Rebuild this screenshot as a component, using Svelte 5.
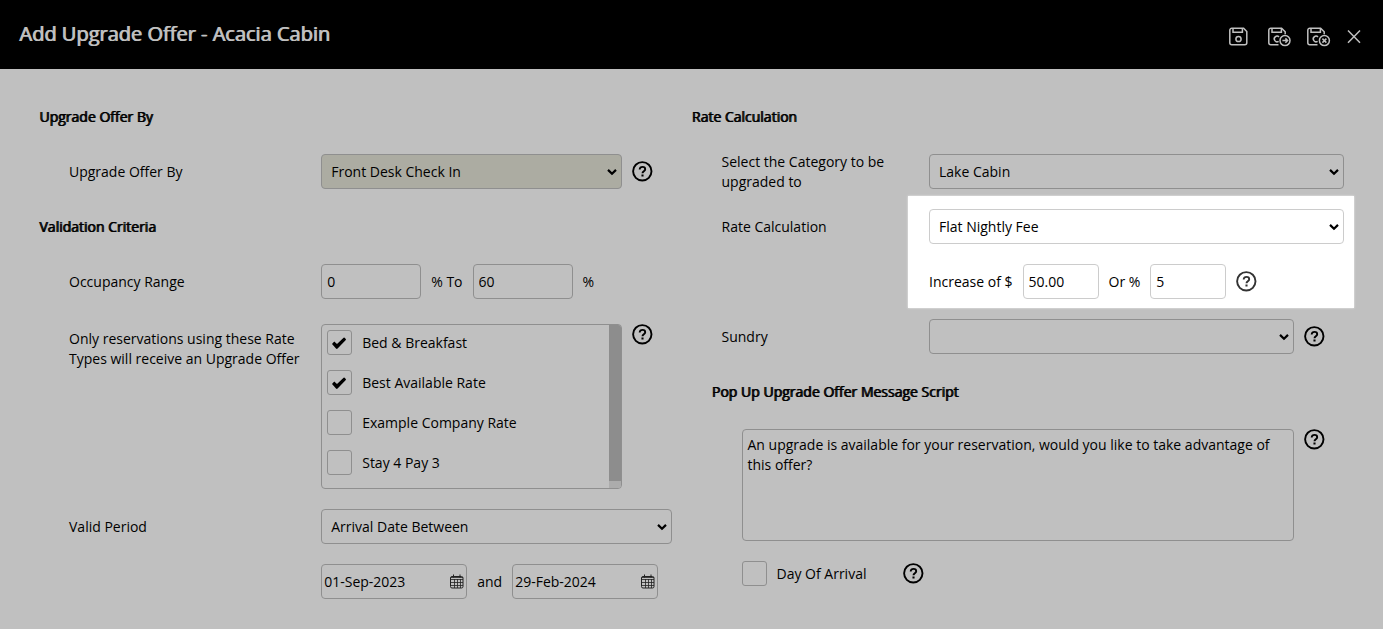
<script>
  let offerBy = $state('Front Desk Check In');
  let occupancyFrom = $state('0');
  let occupancyTo = $state('60');
  let validPeriod = $state('Arrival Date Between');
  let dateFrom = $state('01-Sep-2023');
  let dateTo = $state('29-Feb-2024');

  let category = $state('Lake Cabin');
  let calculation = $state('Flat Nightly Fee');
  let increaseAmount = $state('50.00');
  let increasePercent = $state('5');
  let sundry = $state('');
  let message = $state(
    'An upgrade is available for your reservation, would you like to take advantage of this offer?'
  );
  let dayOfArrival = $state(false);

  let rateTypes = $state([
    { name: 'Bed & Breakfast', checked: true },
    { name: 'Best Available Rate', checked: true },
    { name: 'Example Company Rate', checked: false },
    { name: 'Stay 4 Pay 3', checked: false }
  ]);
</script>

{#snippet help(topic)}
  <button type="button" class="help" aria-label="Help: {topic}">
    <svg width="21" height="21" viewBox="0 0 21 21" fill="none" stroke="currentColor">
      <circle cx="10.3" cy="10.3" r="9.2" stroke-width="1.9" />
      <path d="M7.7 8.4c0-1.6 1.2-2.5 2.8-2.5s2.7 1 2.7 2.3c0 2.1-2.7 2-2.7 4.1" stroke-width="1.9" />
      <path d="M10.5 13.5v2" stroke-width="2.1" />
    </svg>
  </button>
{/snippet}

{#snippet calendar(name)}
  <button type="button" class="calendar" aria-label={name}>
    <svg width="14" height="15" viewBox="0 0 14 15" fill="none" stroke="currentColor">
      <rect x="0.5" y="2.5" width="12.5" height="11.5" rx="1.5" />
      <path d="M1 3.5h12M1 5.5h12M1 8.5h12M1 11.5h12M4.5 5v9M7.5 5v9M10.5 5v9" stroke-width="0.8" />
      <path d="M3.5 0.5v3M10 0.5v3" />
    </svg>
  </button>
{/snippet}

<div class="page">
  <header>
    <h1>Add Upgrade Offer - Acacia Cabin</h1>
    <div class="actions">
      <button type="button" aria-label="Save">
        <svg width="22" height="20" viewBox="0 0 22 20">
          <path d="M3 1.2h11.6l3.2 3.4v11.2a2 2 0 0 1-2 2H2.8a2 2 0 0 1-2-2V3.2a2 2 0 0 1 2.2-2z" />
          <path d="M4 1.4v3.8h9.4V1.4" />
          <circle cx="9.5" cy="12" r="2.6" />
        </svg>
      </button>
      <button type="button" aria-label="Save and continue">
        <svg width="24" height="20" viewBox="0 0 24 20">
          <path d="M11.5 17.8H3.8a2 2 0 0 1-2-2V3.2a2 2 0 0 1 2-2h10.8l3.6 3.6v2.4" />
          <path d="M5 1.4v3.8h9.4V1.4" />
          <path d="M12 9.9a2.8 2.8 0 1 0-.4 4.4" />
          <circle cx="18" cy="13.6" r="5" />
          <path d="M15.4 13.6h5M18.4 11.4l2.2 2.2-2.2 2.2" />
        </svg>
      </button>
      <button type="button" aria-label="Save and close">
        <svg width="24" height="20" viewBox="0 0 24 20">
          <path d="M10.5 17.8H2.8a2 2 0 0 1-2-2V3.2a2 2 0 0 1 2-2h10.8l3.6 3.6v2.4" />
          <path d="M4 1.4v3.8h9.4V1.4" />
          <path d="M11 9.9a2.8 2.8 0 1 0-.4 4.4" />
          <circle cx="17.4" cy="13.6" r="5" />
          <path d="M15.4 11.6l4 4M19.4 11.6l-4 4" />
        </svg>
      </button>
      <button type="button" aria-label="Close">
        <svg width="14" height="20" viewBox="0 0 14 20">
          <path d="M1 3.4l12 12.4M13 3.4L1 15.8" />
        </svg>
      </button>
    </div>
  </header>

  <main>
    <div class="column left">
      <h2>Upgrade Offer By</h2>
      <div class="row">
        <label for="offer-by">Upgrade Offer By</label>
        <div class="field">
          <select id="offer-by" class="required" bind:value={offerBy}>
            <option>Front Desk Check In</option>
          </select>
          <div class="aside">{@render help('Upgrade Offer By')}</div>
        </div>
      </div>

      <h2>Validation Criteria</h2>
      <div class="row">
        <label for="occupancy-from">Occupancy Range</label>
        <div class="field inline">
          <input type="text" id="occupancy-from" class="percent" bind:value={occupancyFrom} />
          <label for="occupancy-to">% To</label>
          <input type="text" id="occupancy-to" class="percent" bind:value={occupancyTo} />
          <span>%</span>
        </div>
      </div>

      <div class="row rates">
        <span class="label" id="rates-label">Only reservations using these Rate Types will receive an Upgrade Offer</span>
        <div class="field">
          <div class="rate-box">
            <div class="rate-list" role="group" aria-labelledby="rates-label">
              {#each rateTypes as rate (rate.name)}
                <label class="check">
                  <input type="checkbox" bind:checked={rate.checked} />
                  {rate.name}
                </label>
              {/each}
            </div>
            <div class="scrollbar"><div class="thumb"></div></div>
          </div>
          <div class="aside">{@render help('Rate Types')}</div>
        </div>
      </div>

      <div class="row">
        <label for="valid-period">Valid Period</label>
        <div class="field">
          <select id="valid-period" bind:value={validPeriod}>
            <option>Arrival Date Between</option>
          </select>
        </div>
      </div>
      <div class="row">
        <span></span>
        <div class="field inline">
          <div class="date">
            <input type="text" aria-label="Valid from" bind:value={dateFrom} />
            {@render calendar('Pick start date')}
          </div>
          <span>and</span>
          <div class="date">
            <input type="text" aria-label="Valid to" bind:value={dateTo} />
            {@render calendar('Pick end date')}
          </div>
        </div>
      </div>
    </div>

    <div class="column right">
      <h2>Rate Calculation</h2>
      <div class="row">
        <label for="category">Select the Category to be upgraded to</label>
        <div class="field">
          <select id="category" bind:value={category}>
            <option>Lake Cabin</option>
          </select>
        </div>
      </div>

      <div class="row top">
        <label for="calculation">Rate Calculation</label>
        <div class="spotlight">
          <select id="calculation" bind:value={calculation}>
            <option>Flat Nightly Fee</option>
          </select>
          <div class="field inline">
            <label for="increase-amount">Increase of $</label>
            <input type="text" id="increase-amount" class="amount" bind:value={increaseAmount} />
            <label for="increase-percent">Or %</label>
            <input type="text" id="increase-percent" class="amount" bind:value={increasePercent} />
            {@render help('Increase')}
          </div>
        </div>
      </div>

      <div class="row">
        <label for="sundry">Sundry</label>
        <div class="field">
          <select id="sundry" bind:value={sundry}>
            <option value=""></option>
          </select>
          <div class="aside">{@render help('Sundry')}</div>
        </div>
      </div>

      <section class="script">
        <h2 id="script-title">Pop Up Upgrade Offer Message Script</h2>
        <div class="field message">
          <textarea aria-labelledby="script-title" bind:value={message}></textarea>
          <div class="aside">{@render help('Message Script')}</div>
        </div>
        <div class="field inline arrival">
          <label class="check">
            <input type="checkbox" bind:checked={dayOfArrival} />
            Day Of Arrival
          </label>
          {@render help('Day Of Arrival')}
        </div>
      </section>
    </div>
  </main>
</div>

<style>
  :global(body) {
    background: #c0c0c0;
  }

  .page {
    font-family: 'Open Sans', 'Noto Sans', sans-serif;
    font-size: 14px;
    line-height: 20px;
    color: #000;
  }

  header {
    display: flex;
    justify-content: space-between;
    align-items: center;
    box-sizing: border-box;
    height: 69px;
    padding: 0 22px 2px 20px;
    background: #000;
    color: #c0c0c0;
  }

  h1 {
    margin: 0;
    font-size: 20px;
    line-height: 28px;
    font-weight: 400;
    text-shadow: -1px 0 currentColor;
  }

  .actions {
    display: flex;
    gap: 16px;
    padding-top: 6px;
  }

  button {
    display: block;
    padding: 0;
    border: 0;
    background: none;
    color: inherit;
    cursor: pointer;
  }

  svg {
    display: block;
  }

  .actions svg {
    fill: none;
    stroke: currentColor;
    stroke-width: 1.5;
  }

  main {
    display: grid;
    grid-template-columns: 1fr 1fr;
    padding: 30px 39px;
  }

  .column {
    display: flex;
    flex-direction: column;
    gap: 20px;
    min-width: 0;
  }

  .left {
    padding-right: 20px;
  }

  h2 {
    margin: 0;
    font-size: 14px;
    line-height: 35px;
    font-weight: 400;
    text-shadow: 1px 0 currentColor;
  }

  .row {
    display: grid;
    align-items: center;
    min-height: 35px;
    margin-left: 30px;
  }

  .left .row {
    grid-template-columns: 18fr 25fr;
  }

  .right .row {
    grid-template-columns: 1fr 2fr;
  }

  .row > label,
  .row > .label {
    padding-right: 20px;
    margin: -5px 0;
  }

  .row.top,
  .row.rates {
    align-items: start;
  }

  .row.top > label {
    margin: 0;
    line-height: 35px;
  }

  .row.rates {
    padding-top: 5px;
  }

  .row.rates > .label {
    padding-top: 5px;
    margin: 0;
  }

  .field {
    display: flex;
    align-items: flex-start;
    min-width: 0;
  }

  .inline {
    align-items: center;
    gap: 10px;
  }

  .aside {
    flex: none;
    box-sizing: border-box;
    width: 50px;
    padding-left: 10px;
  }

  .row:not(.rates) .aside {
    align-self: center;
  }

  .help {
    flex: none;
  }

  input[type='text'],
  select,
  textarea {
    box-sizing: border-box;
    min-width: 0;
    margin: 0;
    border: 1px solid #8f8f8f;
    border-radius: 4px;
    background-color: transparent;
    color: #000;
    font: inherit;
  }

  input[type='text'] {
    height: 35px;
    padding: 0 5px;
  }

  select {
    appearance: none;
    flex: 1;
    width: 100%;
    height: 35px;
    padding: 0 20px 0 9px;
    background-image: url("data:image/svg+xml,%3Csvg xmlns='http://www.w3.org/2000/svg' width='10' height='8'%3E%3Cpath d='M1 1.9l4 3.8 4-3.8' fill='none' stroke='black' stroke-width='2.2'/%3E%3C/svg%3E");
    background-position: right 4px center;
    background-repeat: no-repeat;
  }

  .required {
    background-color: #acaca2;
  }

  .percent {
    width: 100px;
  }

  .amount {
    width: 76px;
  }

  .rate-box {
    display: flex;
    flex: 1;
    box-sizing: border-box;
    height: 165px;
    border: 1px solid #8f8f8f;
    border-radius: 4px;
    overflow: hidden;
  }

  .rate-list {
    flex: 1;
    padding: 5px;
    overflow-y: auto;
    scrollbar-width: none;
  }

  .scrollbar {
    width: 12px;
    background: #acacac;
  }

  .thumb {
    height: 96%;
    background: #8d8d8d;
  }

  .check {
    display: flex;
    align-items: center;
    gap: 10px;
    height: 25px;
  }

  .rate-list .check {
    margin-bottom: 15px;
  }

  .check input {
    appearance: none;
    flex: none;
    box-sizing: border-box;
    width: 25px;
    height: 25px;
    margin: 0;
    border: 1px solid #8f8f8f;
    border-radius: 3px;
  }

  .check input:checked {
    background: url("data:image/svg+xml,%3Csvg xmlns='http://www.w3.org/2000/svg' width='23' height='23'%3E%3Cpath d='M4 13l2.2-2.4 2.8 2.4 6.6-6.2q.5-.4 1 0l1.2 1.2q.4.5 0 1l-8.2 8.6q-.8.7-1.6 0z'/%3E%3C/svg%3E") center no-repeat;
  }

  .date {
    display: flex;
    align-items: center;
    box-sizing: border-box;
    width: 146px;
    height: 35px;
    padding: 0 2px;
    border: 1px solid #8f8f8f;
    border-radius: 4px;
  }

  .date input[type='text'] {
    flex: 1;
    padding: 0;
    border: 0;
  }

  .calendar {
    flex: none;
    color: #222;
  }

  .spotlight {
    display: flex;
    flex-direction: column;
    gap: 20px;
    margin: -13px -10px -9px -21px;
    padding: 13px 10px 9px 21px;
    background: #fff;
    box-shadow: 0 0 2px #eee;
  }

  .spotlight select {
    flex: none;
  }

  .spotlight select,
  .spotlight input[type='text'] {
    border-color: #ccc;
  }

  .spotlight .help {
    color: #333;
  }

  .script {
    margin-left: 20px;
  }

  .message {
    margin: 20px 0 20px 30px;
  }

  textarea {
    flex: 1;
    height: 112px;
    padding: 5px;
    resize: none;
  }

  .arrival {
    margin-left: 30px;
  }

  .arrival .check {
    width: 151px;
  }
</style>
